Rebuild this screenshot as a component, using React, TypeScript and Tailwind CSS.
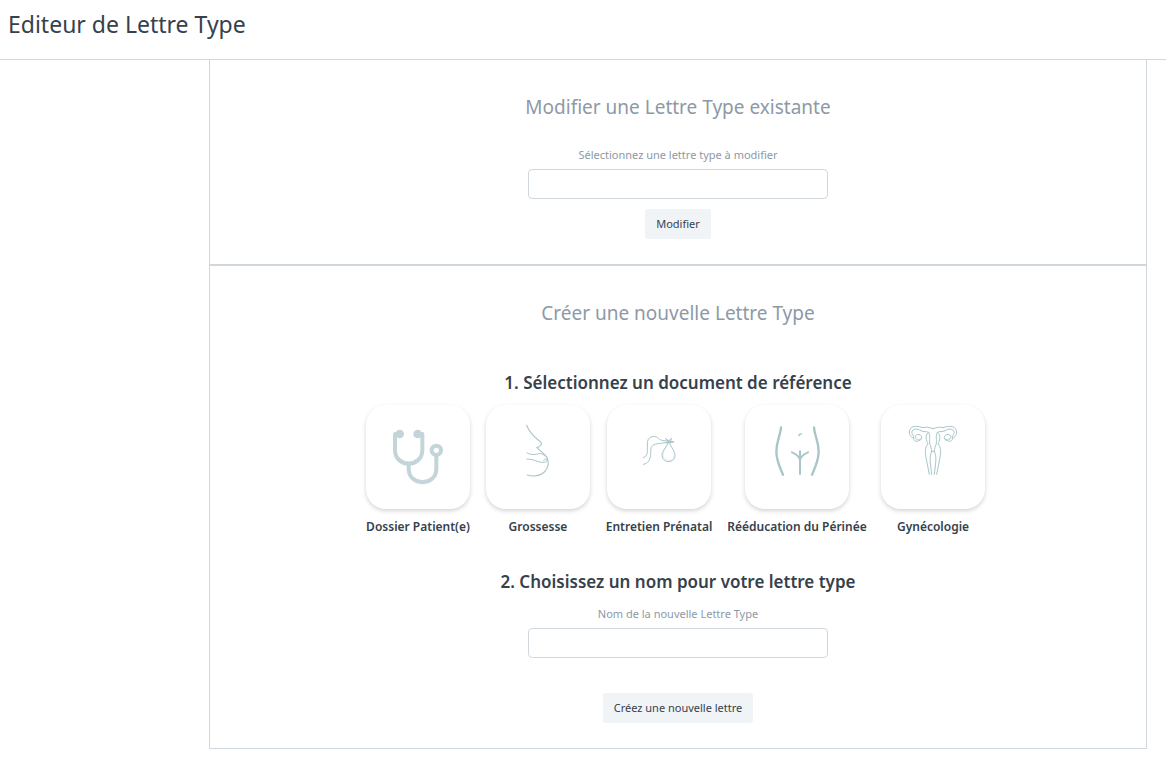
import type { ReactNode } from "react";

function StethoscopeIcon() {
  return (
    <svg viewBox="18 15 312 312" className="size-full" fill="none" stroke="#c3d5d9" strokeWidth="12" aria-hidden="true">
      <path d="M118 102H105V150C105 204 187 204 187 150V102H174" strokeLinejoin="round" />
      <circle cx="119" cy="102" r="13" fill="#c3d5d9" stroke="none" />
      <circle cx="173" cy="102" r="13" fill="#c3d5d9" stroke="none" />
      <path d="M146 190V206C146 260 229 260 229 206V168" />
      <circle cx="229" cy="151" r="14" strokeWidth="12" />
    </svg>
  );
}

function PregnancyIcon() {
  return (
    <svg viewBox="18 15 312 312" className="size-full" fill="none" stroke="#a9c5ca" strokeWidth="3.5" strokeLinecap="round" aria-hidden="true">
      <path d="M140 76C149 101 169 116 183 127C188 132 180 140 171 143C179 153 194 160 201 172C215 207 185 237 142 225" />
      <path d="M141 159C151 164 160 164 169 163C178 159 186 160 196 168M141 177C159 177 170 185 185 187C194 188 202 185 202 180C199 175 191 177 191 182" strokeWidth="3" />
    </svg>
  );
}

function StorkIcon() {
  return (
    <svg viewBox="21 15 312 312" className="size-full" fill="none" stroke="#a9c5ca" strokeWidth="3" strokeLinecap="round" strokeLinejoin="round" aria-hidden="true">
      <path d="M130 173C140 169 143 162 142 149C142 138 142 130 143 123C146 108 168 105 176 116C182 122 190 122 222 125C195 129 175 129 162 134C149 140 153 151 152 164C150 181 145 190 130 193" />
      <path d="M206 127C198 144 185 153 186 168C190 191 222 190 225 169C226 153 213 143 208 127M197 116L205 123L215 115L211 124L221 126L208 127L198 129L204 123Z" />
      <path d="M202 133C196 147 189 155 190 168C195 184 216 187 222 170" strokeWidth="1" />
    </svg>
  );
}

function PerineumIcon() {
  return (
    <svg viewBox="21 15 312 312" className="size-full" fill="none" stroke="#a9c5ca" strokeWidth="7" strokeLinecap="round" aria-hidden="true">
      <path d="M129 82C127 109 115 124 115 154C115 183 126 203 135 224M228 82C230 109 242 124 242 154C242 183 231 203 222 224" />
      <path d="M186 154V222M162 157Q180 164 186 178Q192 164 210 157" strokeWidth="6" />
      <path d="M183 107Q183 102 190 102" strokeWidth="4" />
    </svg>
  );
}

function UterusIcon() {
  return (
    <svg viewBox="21 15 312 312" className="size-full" fill="none" stroke="#a9c5ca" strokeWidth="3" strokeLinecap="round" strokeLinejoin="round" aria-hidden="true">
      <path d="M177 86C163 82 158 80 147 83C134 79 112 74 107 91C103 104 112 112 119 115C118 124 128 126 133 122C145 121 146 108 138 105C130 100 121 107 125 114C128 122 137 121 141 116M119 114C121 108 116 106 114 101C111 87 126 84 137 90C146 97 155 93 164 97C152 105 157 122 162 132C151 142 154 160 157 178L166 223M164 97C171 109 164 120 168 134C173 146 174 154 171 160C165 173 171 202 173 223" />
      <path d="M177 86C191 82 196 80 207 83C220 79 242 74 247 91C251 104 242 112 235 115C236 124 226 126 221 122C209 121 208 108 216 105C224 100 233 107 229 114C226 122 217 121 213 116M235 114C233 108 238 106 240 101C243 87 228 84 217 90C208 97 199 93 190 97C202 105 197 122 192 132C203 142 200 160 197 178L188 223M190 97C183 109 190 120 186 134C181 146 180 154 183 160C189 173 183 202 181 223M172 154H182" />
    </svg>
  );
}

const documents: { label: string; icon: ReactNode }[] = [
  { label: "Dossier Patient(e)", icon: <StethoscopeIcon /> },
  { label: "Grossesse", icon: <PregnancyIcon /> },
  { label: "Entretien Prénatal", icon: <StorkIcon /> },
  { label: "Rééducation du Périnée", icon: <PerineumIcon /> },
  { label: "Gynécologie", icon: <UterusIcon /> },
];

const buttonClass = "h-[30px] rounded-[3px] bg-[#f0f4f7] px-[11px] text-[11px] text-[#36414c]";
const fieldClass = "h-[30px] w-[300px] max-w-full rounded border border-[#d1d8dd] bg-white px-2 text-xs outline-none";
const labelClass = "text-[11px] leading-5 text-[#8d99a6]";
const titleClass = "text-[19px] leading-7 text-[#8d99a6]";
const stepClass = "text-[17px] leading-7 font-semibold";

export default function App() {
  return (
    <div className="bg-white font-['Noto_Sans',sans-serif] text-[#36414c]">
      <header className="flex h-[60px] items-start border-b border-[#d1d8dd] px-2 pt-2">
        <h1 className="text-[23px] leading-8">Editeur de Lettre Type</h1>
      </header>
      <main className="mr-[19px] ml-[209px]">
        <section className="flex flex-col items-center border-x border-b border-[#d1d8dd] pt-[33px] pb-[25px]">
          <h2 className={titleClass}>Modifier une Lettre Type existante</h2>
          <label htmlFor="existing" className={`mt-6 ${labelClass}`}>
            Sélectionnez une lettre type à modifier
          </label>
          <input id="existing" type="text" className={`mt-1 ${fieldClass}`} />
          <button type="button" className={`mt-[10px] ${buttonClass}`}>Modifier</button>
        </section>
        <section className="flex flex-col items-center border border-[#d1d8dd] pt-[33px] pb-[25px]">
          <h2 className={titleClass}>Créer une nouvelle Lettre Type</h2>
          <h3 className={`mt-[42px] ${stepClass}`}>1. Sélectionnez un document de référence</h3>
          <ul className="mt-2 grid grid-cols-[106px_104px_108px_138px_104px] gap-[15px] pr-[6px]">
            {documents.map(({ label, icon }) => (
              <li key={label}>
                <button type="button" className="flex w-full flex-col items-center text-xs font-semibold">
                  <span className="block size-[104px] rounded-[20px] bg-white shadow-[0_2px_4px_rgba(0,0,0,0.17)]">{icon}</span>
                  <span className="mt-2 leading-5 whitespace-nowrap">{label}</span>
                </button>
              </li>
            ))}
          </ul>
          <h3 className={`mt-[31px] ${stepClass}`}>2. Choisissez un nom pour votre lettre type</h3>
          <label htmlFor="letter-name" className={`mt-2 ${labelClass}`}>
            Nom de la nouvelle Lettre Type
          </label>
          <input id="letter-name" type="text" className={`mt-1 ${fieldClass}`} />
          <button type="button" className={`mt-[35px] ${buttonClass}`}>Créez une nouvelle lettre</button>
        </section>
      </main>
    </div>
  );
}
